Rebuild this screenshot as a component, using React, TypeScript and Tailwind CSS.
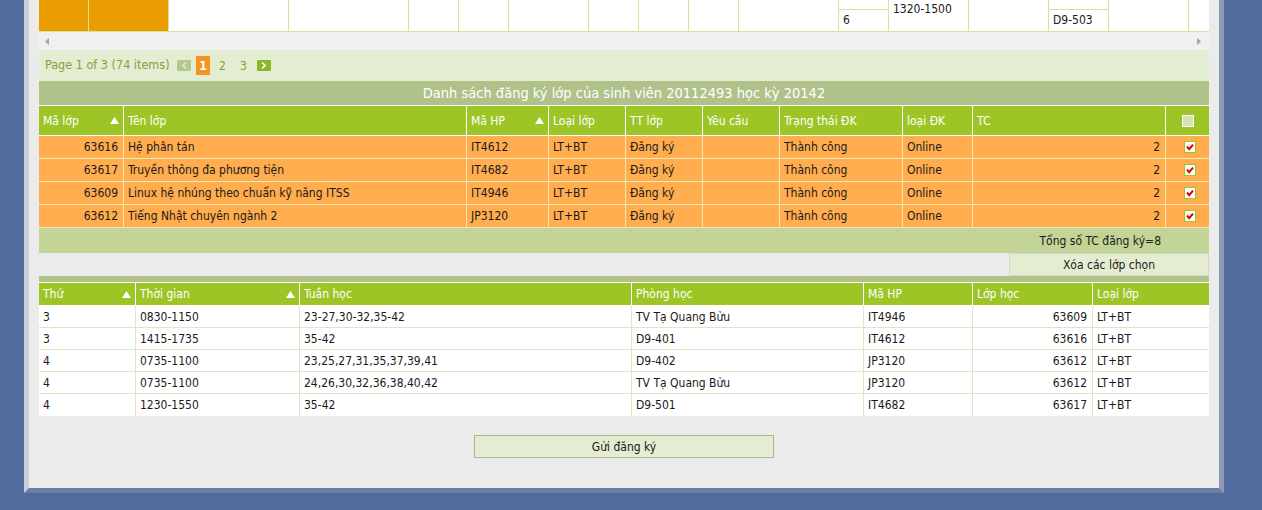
import React from "react";

const F = "font-['DejaVu_Sans_Condensed','DejaVu_Sans',sans-serif]";

function SortArrow() {
  return (
    <svg width="9" height="7" viewBox="0 0 9 7">
      <path d="M4.5 0 L9 7 L0 7 Z" fill="#ffffff" />
    </svg>
  );
}

function CheckBox({ header }: { header?: boolean }) {
  if (header) {
    return (
      <svg width="12" height="12" viewBox="0 0 12 12">
        <rect x="0.5" y="0.5" width="11" height="11" fill="#d6e2b6" stroke="#ffffff" />
      </svg>
    );
  }
  return (
    <svg width="12" height="12" viewBox="0 0 12 12">
      <rect x="0.5" y="0.5" width="11" height="11" fill="#ffffff" stroke="#9ec526" />
      <path d="M3 5.5 L5.2 8.2 L9 3.6" fill="none" stroke="#e00000" strokeWidth="2" />
    </svg>
  );
}

// top (cut off) table
const topCols = [49, 80, 120, 120, 50, 50, 80, 50, 50, 50, 100, 50, 80, 80, 60, 80];

const regCols = [84, 343, 82, 77, 77, 77, 123, 70, 193, 44];
const regHead = ["Mã lớp", "Tên lớp", "Mã HP", "Loại lớp", "TT lớp", "Yêu cầu", "Trạng thái ĐK", "loại ĐK", "TC"];
const regRows = [
  ["63616", "Hệ phân tán", "IT4612"],
  ["63617", "Truyền thông đa phương tiện", "IT4682"],
  ["63609", "Linux hệ nhúng theo chuẩn kỹ năng ITSS", "IT4946"],
  ["63612", "Tiếng Nhật chuyên ngành 2", "JP3120"],
];

const schCols = [96, 164, 332, 232, 109, 120, 117];
const schHead = ["Thứ", "Thời gian", "Tuần học", "Phòng học", "Mã HP", "Lớp học", "Loại lớp"];
const schRows = [
  ["3", "0830-1150", "23-27,30-32,35-42", "TV Tạ Quang Bửu", "IT4946", "63609", "LT+BT"],
  ["3", "1415-1735", "35-42", "D9-401", "IT4612", "63616", "LT+BT"],
  ["4", "0735-1100", "23,25,27,31,35,37,39,41", "D9-402", "JP3120", "63612", "LT+BT"],
  ["4", "0735-1100", "24,26,30,32,36,38,40,42", "TV Tạ Quang Bửu", "JP3120", "63612", "LT+BT"],
  ["4", "1230-1550", "35-42", "D9-501", "IT4682", "63617", "LT+BT"],
];

export default function App() {
  return (
    <div className={`w-[1262px] h-[510px] overflow-hidden bg-[#516c9c] text-[12px] text-[#1a1a1a] ${F}`}>
      <div className="ml-[24px] w-[1200px] h-[493px] border-l-[5px] border-r-[5px] border-b-[5px] border-l-[#c9ced8] border-r-[#8d99b2] border-b-[#6d7ea2] bg-[#ebebeb] px-[10px]">
        {/* cut-off schedule grid */}
        <div className="flex h-[32px] border-b border-[#d3e4a0] bg-white">
          {topCols.map((w, i) => (
            <div
              key={i}
              style={{ width: w }}
              className={`shrink-0 h-full flex flex-col ${i > 0 ? "border-l border-[#d3e4a0]" : ""} ${i < 2 ? "bg-[#eb9c00]" : ""}`}
            >
              {i === 11 && (
                <>
                  <div className="h-[10px] border-b border-[#d3e4a0] overflow-hidden pl-[4px]">
                    <div className="-mt-[12px] leading-[15px]">5</div>
                  </div>
                  <div className="pl-[4px] pt-[3px] leading-[15px]">6</div>
                </>
              )}
              {i === 12 && <div className="pl-[4px] pt-[2px] leading-[15px] whitespace-nowrap">1320-1500</div>}
              {i === 14 && (
                <>
                  <div className="h-[10px] border-b border-[#d3e4a0]" />
                  <div className="pl-[4px] pt-[3px] leading-[15px]">D9-503</div>
                </>
              )}
            </div>
          ))}
          <div className="flex-1 border-l border-[#d3e4a0]" />
        </div>

        {/* scrollbar */}
        <div className="h-[18px] bg-[#f0f0f0] flex items-center justify-between pl-[6px] pr-[8px]">
          <svg width="4" height="7" viewBox="0 0 4 7">
            <path d="M4 0 L0 3.5 L4 7 Z" fill="#a3a3a3" />
          </svg>
          <svg width="4" height="7" viewBox="0 0 4 7">
            <path d="M0 0 L4 3.5 L0 7 Z" fill="#a3a3a3" />
          </svg>
        </div>

        {/* pager */}
        <div className="h-[31px] bg-[#e3edd1] flex items-center pl-[6px] text-[#8b9c3c]">
          <span className="w-[132px] shrink-0 text-[12.5px]">Page 1 of 3 (74 items)</span>
          <span className="w-[14px] h-[11px] rounded-[1px] bg-[#b5c98c] flex items-center justify-center">
            <svg width="5" height="7" viewBox="0 0 5 7">
              <path d="M4 0.5 L1 3.5 L4 6.5" fill="none" stroke="#dfe8c9" strokeWidth="1.6" />
            </svg>
          </span>
          <span className="ml-[5px] w-[14px] h-[19px] bg-[#f7941d] text-white font-bold text-[13px] flex items-center justify-center">1</span>
          <span className="ml-[9px]">2</span>
          <span className="ml-[14px]">3</span>
          <span className="ml-[10px] w-[14px] h-[11px] rounded-[1px] bg-[#8cb52a] flex items-center justify-center">
            <svg width="5" height="7" viewBox="0 0 5 7">
              <path d="M1 0.5 L4 3.5 L1 6.5" fill="none" stroke="#ffffff" strokeWidth="1.6" />
            </svg>
          </span>
        </div>

        {/* registered classes */}
        <div className="h-[25px] border-b border-white bg-[#b0c28a] text-white text-[14.5px] text-center leading-[24px]">
          Danh sách đăng ký lớp của sinh viên 20112493 học kỳ 20142
        </div>
        <div className="flex h-[30px] border-b border-white bg-[#9ec526] text-white">
          {regCols.map((w, i) => (
            <div
              key={i}
              style={{ width: w }}
              className={`shrink-0 flex items-center justify-between pl-[4px] pr-[4px] ${i > 0 ? "border-l border-white" : ""} ${i === 9 ? "justify-center pl-0 pr-0" : ""}`}
            >
              {i === 9 ? <CheckBox header /> : <span>{regHead[i]}</span>}
              {(i === 0 || i === 2) && <SortArrow />}
            </div>
          ))}
        </div>
        {regRows.map((r, ri) => {
          const cells = [r[0], r[1], r[2], "LT+BT", "Đăng ký", "", "Thành công", "Online", "2"];
          return (
            <div key={ri} className="flex h-[23px] border-b border-[#ecebb5] bg-[#ffad4f]">
              {regCols.map((w, i) => (
                <div
                  key={i}
                  style={{ width: w }}
                  className={`shrink-0 flex items-center ${i > 0 ? "border-l border-[#ecebb5]" : ""} ${i === 0 || i === 8 ? "justify-end pr-[5px]" : "pl-[4px]"} ${i === 9 ? "justify-center pl-0" : ""}`}
                >
                  {i === 9 ? <CheckBox /> : cells[i]}
                </div>
              ))}
            </div>
          );
        })}
        <div className="h-[25px] bg-[#c2d596] flex items-center justify-end pr-[48px]">Tổng số TC đăng ký=8</div>
        <div className="h-[23px] flex justify-end">
          <button className="w-[200px] h-full bg-[#e4edd2] border border-[#d3d9c6] text-[#1a1a1a] text-[12px]">
            Xóa các lớp chọn
          </button>
        </div>

        {/* timetable */}
        <div className="h-[7px] border-b border-white bg-[#b0c28a]" />
        <div className="flex h-[23px] border-b border-white bg-[#9ec526] text-white">
          {schCols.map((w, i) => (
            <div
              key={i}
              style={{ width: w }}
              className={`shrink-0 flex items-center justify-between pl-[4px] pr-[4px] ${i > 0 ? "border-l border-white" : ""}`}
            >
              <span>{schHead[i]}</span>
              {i < 2 && <SortArrow />}
            </div>
          ))}
        </div>
        {schRows.map((r, ri) => (
          <div key={ri} className={`flex h-[22px] bg-white ${ri < 4 ? "border-b border-[#dfe6c4]" : ""}`}>
            {schCols.map((w, i) => (
              <div
                key={i}
                style={{ width: w }}
                className={`shrink-0 flex items-center ${i > 0 ? "border-l border-[#dfe6c4]" : ""} ${i === 5 ? "justify-end pr-[5px]" : "pl-[4px]"}`}
              >
                {r[i]}
              </div>
            ))}
          </div>
        ))}

        <button className="block mx-auto mt-[19px] w-[300px] h-[23px] bg-[#e4edd2] border border-[#aab98c] text-[#1a1a1a] text-[12px]">
          Gửi đăng ký
        </button>
      </div>
    </div>
  );
}
